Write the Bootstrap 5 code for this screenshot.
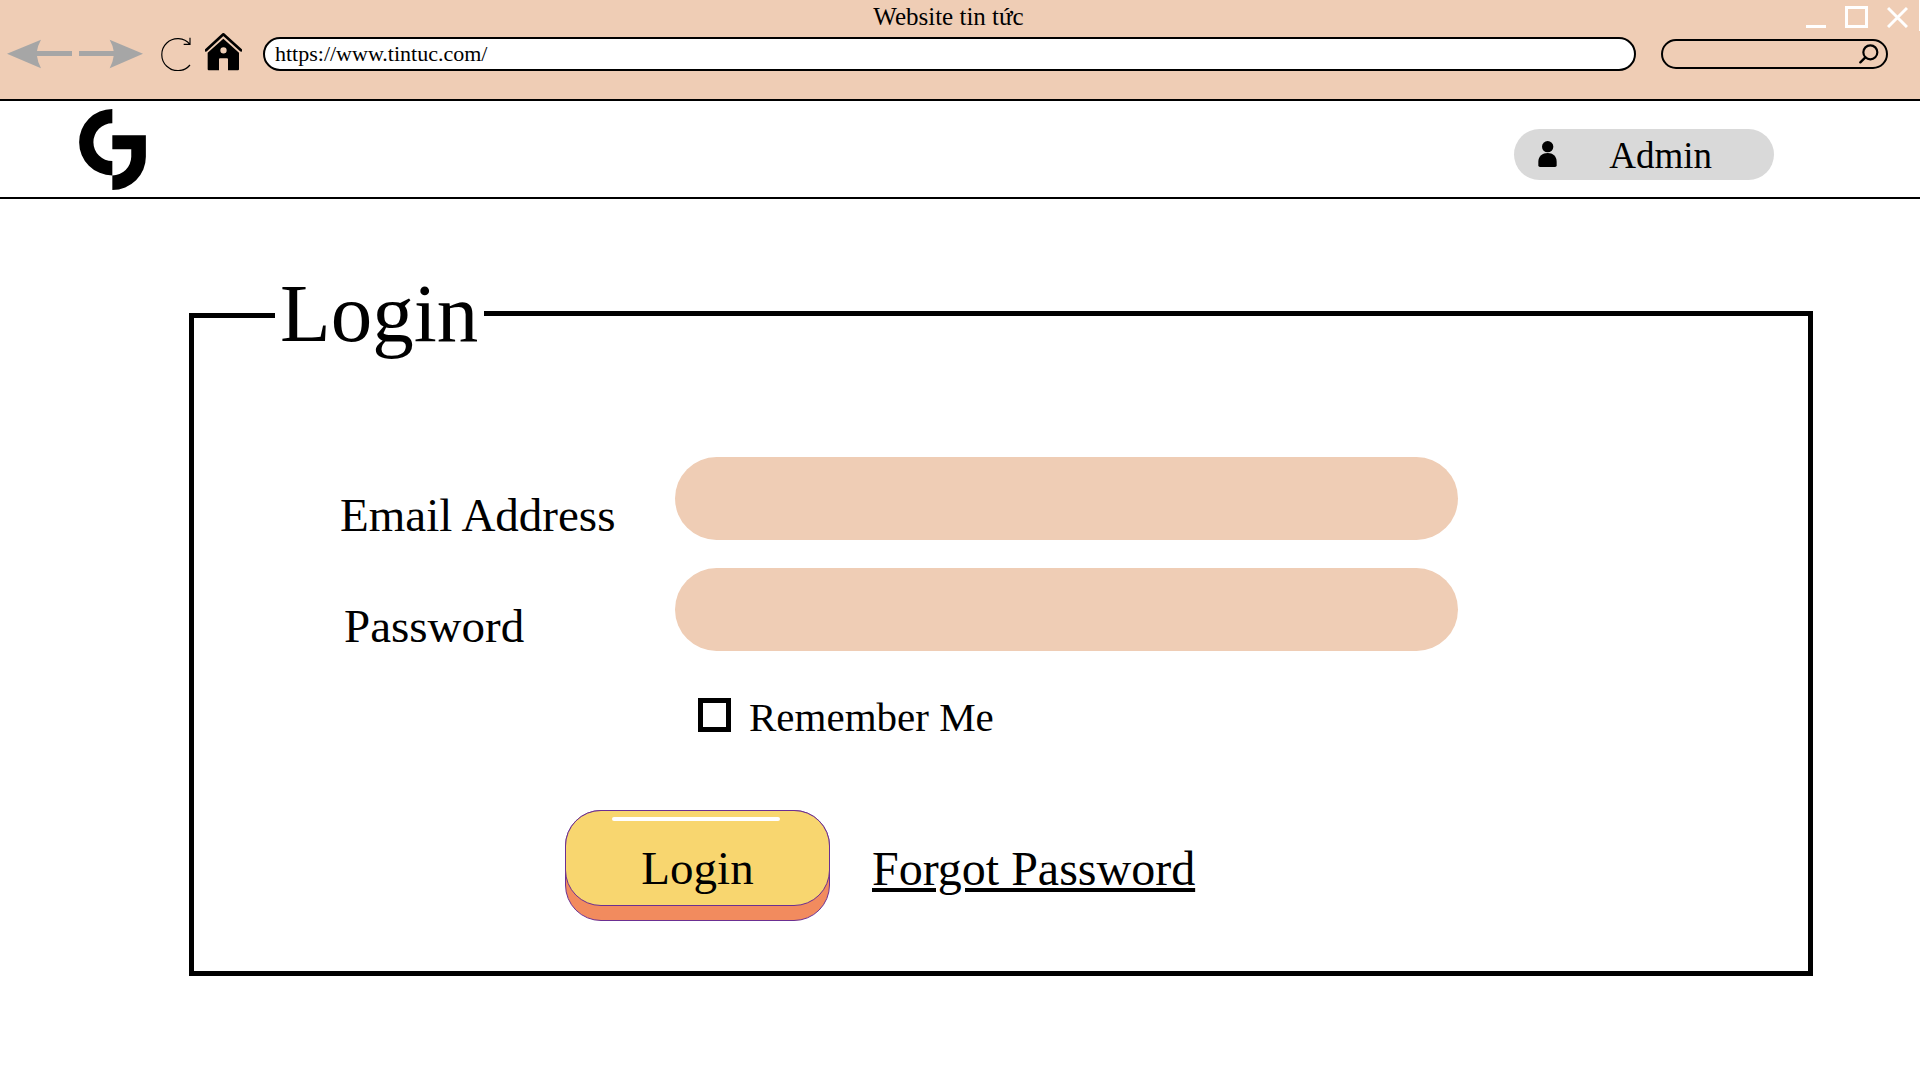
<!DOCTYPE html>
<html lang="vi">
<head>
<meta charset="utf-8">
<meta name="viewport" content="width=device-width, initial-scale=1">
<title>Website tin tức</title>
<link href="https://cdn.jsdelivr.net/npm/bootstrap@5.3.0/dist/css/bootstrap.min.css" rel="stylesheet">
<style>
  :root { --peach: #efcdb5; --plum: #6b2f92; }
  body { font-family: "Liberation Serif", "Times New Roman", serif; color: #000; background: #fff; }
  svg { display: block; }
  .bare { border: 0; padding: 0; background: none; color: inherit; }

  /* Browser chrome */
  .chrome { background: var(--peach); border-bottom: 2px solid #000; padding-bottom: 28px; }
  .chrome::after { content: ""; position: absolute; top: 0; right: 0; width: 1px; height: 31px; background: #fff; }
  .title-row { height: 37px; padding: 0 12px 0 0; }
  .page-title { font-size: 25px; line-height: 28px; margin: 3px 11px 0 0; }
  .window-buttons { gap: 19px; padding-top: 6px; }
  .tool-row { padding: 0 32px 0 7px; }
  .arrows { gap: 7px; margin-right: 18px; }
  .reload { margin-right: 14px; }
  .home { margin: -4px 21px 0 0; }
  .address { height: 34px; min-width: 0; border: 2px solid #000; border-radius: 17px; padding: 0 10px; font-size: 22px; background: #fff; color: #000; }
  .finder { width: 227px; height: 30px; margin: 0 0 0 25px; border: 2px solid #000; border-radius: 15px; padding: 0 7px 0 14px; }
  .finder input { min-width: 0; font-size: 18px; outline: 0; }

  /* Site header */
  .site-header { height: 98px; padding: 0 146px 0 79px; border-bottom: 2px solid #000; }
  .admin-pill { background: #d9d9d9; border-radius: 26px; padding: 7px 62px 4px 24px; gap: 52px; font-size: 37px; line-height: 40px; margin-top: 11px; }

  /* Login panel */
  .login-area { padding: 64px 107px 48px 189px; }
  .panel { border: 5px solid #000; border-top: 0; }
  .panel legend { float: none; display: flex; align-items: center; margin: 0; font-size: 83px; line-height: 100px; }
  .line { height: 5px; background: #000; }
  .line-start { width: 81px; margin: 5px 5px 0 0; }
  .line-end { margin: 0 -5px 0 6px; }
  .panel-body { padding: 94px 350px 50px 146px; }
  .field-row { margin-bottom: 28px; }
  .field-row label { width: 335px; flex: none; font-size: 47px; line-height: 50px; }
  .field-row input { height: 83px; border: 0; border-radius: 42px; background: var(--peach); padding: 0 36px; font-size: 36px; }
  .field-row input:focus { background: var(--peach); box-shadow: 0 0 0 3px #000; }
  .remember { margin: 43px 0 0 358px; gap: 18px; font-size: 41px; line-height: 46px; }
  .remember .form-check-input { width: 33px; height: 34px; margin: 4px 0 0; border: 5px solid #000; border-radius: 0; }
  .remember .form-check-input:checked { background-color: #000; }
  .actions { margin: 70px 0 0 225px; gap: 42px; }
  .login-button { width: 265px; flex: none; border: 1px solid var(--plum); border-radius: 36px; background: #f28b5e; padding: 0 0 14px; color: #000; font-size: 47px; line-height: 50px; }
  .login-face { display: block; position: relative; margin: -1px -1px 0; border: 1px solid var(--plum); border-radius: 36px; background: #f8d66f; padding: 32px 0 12px; }
  .login-face::before { content: ""; position: absolute; top: 6px; left: 46px; right: 49px; height: 4px; border-radius: 2px; background: #fff; }
  .forgot { margin-top: 32px; color: #000; font-size: 48px; line-height: 54px; text-decoration-thickness: 4px; text-underline-offset: 3px; }

  @media (max-width: 1400px) {
    .login-area { padding-left: 32px; padding-right: 32px; }
    .panel-body { padding-left: 32px; padding-right: 32px; }
    .field-row { flex-wrap: wrap; }
    .remember, .actions { margin-left: 0; }
    .actions { flex-wrap: wrap; }
    .site-header { padding-left: 32px; padding-right: 32px; }
  }
</style>
<script src="https://cdn.jsdelivr.net/npm/bootstrap@5.3.0/dist/js/bootstrap.bundle.min.js" defer></script>
</head>
<body>

<div class="chrome position-relative">
  <div class="title-row d-flex align-items-start">
    <div class="flex-fill w-100"></div>
    <div class="page-title text-nowrap">Website tin tức</div>
    <div class="window-buttons flex-fill w-100 d-flex justify-content-end">
      <button class="bare" type="button" aria-label="Minimize"><svg width="20" height="22"><path d="M0 20.5H20" stroke="#fff" stroke-width="3"/></svg></button>
      <button class="bare" type="button" aria-label="Maximize"><svg width="23" height="22"><rect x="1.5" y="1.5" width="20" height="19" fill="none" stroke="#fff" stroke-width="3"/></svg></button>
      <button class="bare" type="button" aria-label="Close"><svg width="21" height="22"><path d="M1 2L20 21M20 2L1 21" stroke="#fff" stroke-width="3"/></svg></button>
    </div>
  </div>
  <div class="tool-row d-flex align-items-center">
    <div class="arrows d-flex">
      <button class="bare" type="button" aria-label="Back"><svg width="65" height="30" viewBox="22 117 195 90"><path d="M22 161L124 119Q114 137 112 153H217V168H112Q114 187 124 205Z" fill="#a6a6a6"/></svg></button>
      <button class="bare" type="button" aria-label="Forward"><svg width="64" height="30" viewBox="236 117 192 90"><path d="M428 161L328 119Q338 137 340 153H236V168H340Q338 187 328 205Z" fill="#a6a6a6"/></svg></button>
    </div>
    <button class="reload bare" type="button" aria-label="Reload"><svg width="30" height="34" viewBox="482 109 90 102"><path d="M569 131A48 48 0 1 0 569 193M569 111V131H550" fill="none" stroke="#000" stroke-width="3.5"/></svg></button>
    <button class="home bare" type="button" aria-label="Home"><svg width="37" height="38" viewBox="615 96 111 114"><path d="M618 148L670 100L723 148" fill="none" stroke="#000" stroke-width="8" stroke-linecap="round" stroke-linejoin="round"/><path fill-rule="evenodd" d="M623 155L670 113L717 155V205Q717 208 714 208H684V175Q684 172 681 172H660Q657 172 657 175V208H626Q623 208 623 205ZM661 148a9.500 9.500 0 1 0 19 0a9.500 9.500 0 1 0 -19 0Z"/></svg></button>
    <input class="address flex-grow-1" type="text" aria-label="Address" value="https://www.tintuc.com/">
    <div class="finder d-flex align-items-center">
      <input class="bare flex-grow-1" type="text" aria-label="Search">
      <button class="bare" type="button" aria-label="Search"><svg width="20" height="20" viewBox="778 131 60 60"><circle cx="812" cy="156" r="21" fill="none" stroke="#000" stroke-width="6.500"/><path d="M782 186L797 171" stroke="#000" stroke-width="7" stroke-linecap="round"/></svg></button>
    </div>
  </div>
</div>

<header class="site-header d-flex align-items-center justify-content-between">
  <a href="#" aria-label="Home page"><svg width="67" height="81" viewBox="237 323 201 244"><path d="M337 323A100 100 0 0 0 337 523V480A57 57 0 0 1 337 366ZM337 402H438V467A101 100 0 0 1 337 567V523A57 57 0 0 0 394 467V444H337Z"/></svg></a>
  <button class="admin-pill bare d-flex align-items-center" type="button">
    <svg class="mb-1" width="19" height="26" viewBox="0 0 57 78"><circle cx="29" cy="17" r="17"/><path d="M1 62C1 46 14 36 29 36S56 46 56 62V73Q56 78 51 78H6Q1 78 1 73Z"/></svg>
    <span>Admin</span>
  </button>
</header>

<main class="login-area">
  <form>
    <fieldset class="panel">
      <legend><span class="line line-start"></span>Login<span class="line line-end flex-grow-1"></span></legend>
      <div class="panel-body">
        <div class="field-row d-flex align-items-end">
          <label for="email">Email Address</label>
          <input class="form-control" id="email" type="email">
        </div>
        <div class="field-row d-flex align-items-end">
          <label class="ps-1" for="password">Password</label>
          <input class="form-control" id="password" type="password">
        </div>
        <div class="remember d-flex align-items-start">
          <input class="form-check-input flex-shrink-0" id="remember" type="checkbox">
          <label for="remember">Remember Me</label>
        </div>
        <div class="actions d-flex align-items-start">
          <button class="login-button" type="button"><span class="login-face">Login</span></button>
          <a class="forgot text-nowrap" href="#">Forgot Password</a>
        </div>
      </div>
    </fieldset>
  </form>
</main>

</body>
</html>
